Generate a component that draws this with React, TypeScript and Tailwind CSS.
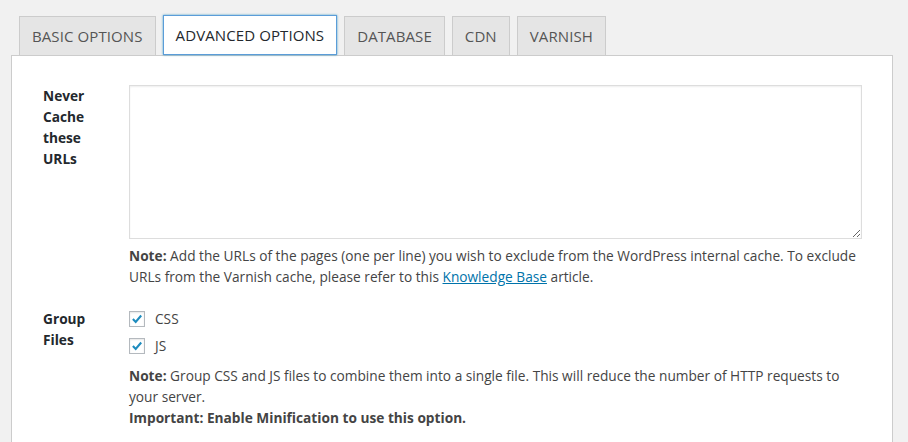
import { ReactNode } from "react";

const tabs = ["Basic Options", "Advanced Options", "Database", "CDN", "Varnish"];

const Check = ({ label }: { label: string }) => {
  return (
    <label className="flex items-center h-[26px]">
      <span className="flex items-center justify-center w-4 h-4 bg-white border border-[#b4b9be] shadow-[inset_0_1px_2px_rgba(0,0,0,0.1)]">
        <svg viewBox="0 0 16 16" className="w-4 h-4">
          <path d="M3.3 8 L6.5 11.3 L12.8 4" fill="none" stroke="#1e8cbe" strokeWidth="2.4" />
        </svg>
      </span>
      <span className="ml-[10px]">{label}</span>
    </label>
  );
};

const Row = ({ label, children }: { label: ReactNode; children: ReactNode }) => {
  return (
    <div className="flex">
      <div className="w-[86px] shrink-0 font-bold text-[#23282d] leading-[21px] pl-[31px] box-content">
        {label}
      </div>
      <div className="flex-1 pr-[30px]">{children}</div>
    </div>
  );
};

export default function App() {
  return (
    <div className="w-[908px] h-[442px] overflow-hidden bg-[#f1f1f1] text-[13.7px] text-[#444] font-['Open_Sans',sans-serif]">
      <div className="flex items-end pl-[19px] pt-[15px] gap-[7px] text-[15px] tracking-[0.1px]">
        {tabs.map((t, i) =>
          i === 1 ? (
            <div
              key={t}
              className="h-[40px] px-3 flex items-center uppercase bg-white text-[#23282d] border border-[#5b9dd9] shadow-[0_0_2px_rgba(30,140,190,0.8)] relative z-10"
            >
              {t}
            </div>
          ) : (
            <div
              key={t}
              className="h-[39px] px-3 flex items-center uppercase bg-[#e5e5e5] text-[#555] border border-[#ccc] border-b-0"
            >
              {t}
            </div>
          )
        )}
      </div>
      <div className="ml-[11px] mr-[15px] bg-white border border-[#ccc] h-[400px] pt-[29px]">
        <Row
          label={
            <>
              Never
              <br />
              Cache
              <br />
              these
              <br />
              URLs
            </>
          }
        >
          <textarea className="block w-full h-[154px] border border-[#ddd] shadow-[inset_0_1px_2px_rgba(0,0,0,0.07)]" />
          <p className="mt-[6px] leading-[21px]">
            <span className="font-bold">Note:</span> Add the URLs of the pages (one per line) you wish to exclude from the
            WordPress internal cache. To exclude URLs from the Varnish cache, please refer to this{" "}
            <a className="text-[#0073aa] underline">Knowledge Base</a> article.
          </p>
        </Row>
        <div className="h-[21px]" />
        <Row
          label={
            <>
              Group
              <br />
              Files
            </>
          }
        >
          <div className="-mt-[2px]">
            <Check label="CSS" />
            <div className="h-[1px]" />
            <Check label="JS" />
          </div>
          <p className="mt-[6px] leading-[21px]">
            <span className="font-bold">Note:</span> Group CSS and JS files to combine them into a single file. This will
            reduce the number of HTTP requests to your server.
          </p>
          <p className="font-bold leading-[21px]">Important: Enable Minification to use this option.</p>
        </Row>
      </div>
    </div>
  );
}
